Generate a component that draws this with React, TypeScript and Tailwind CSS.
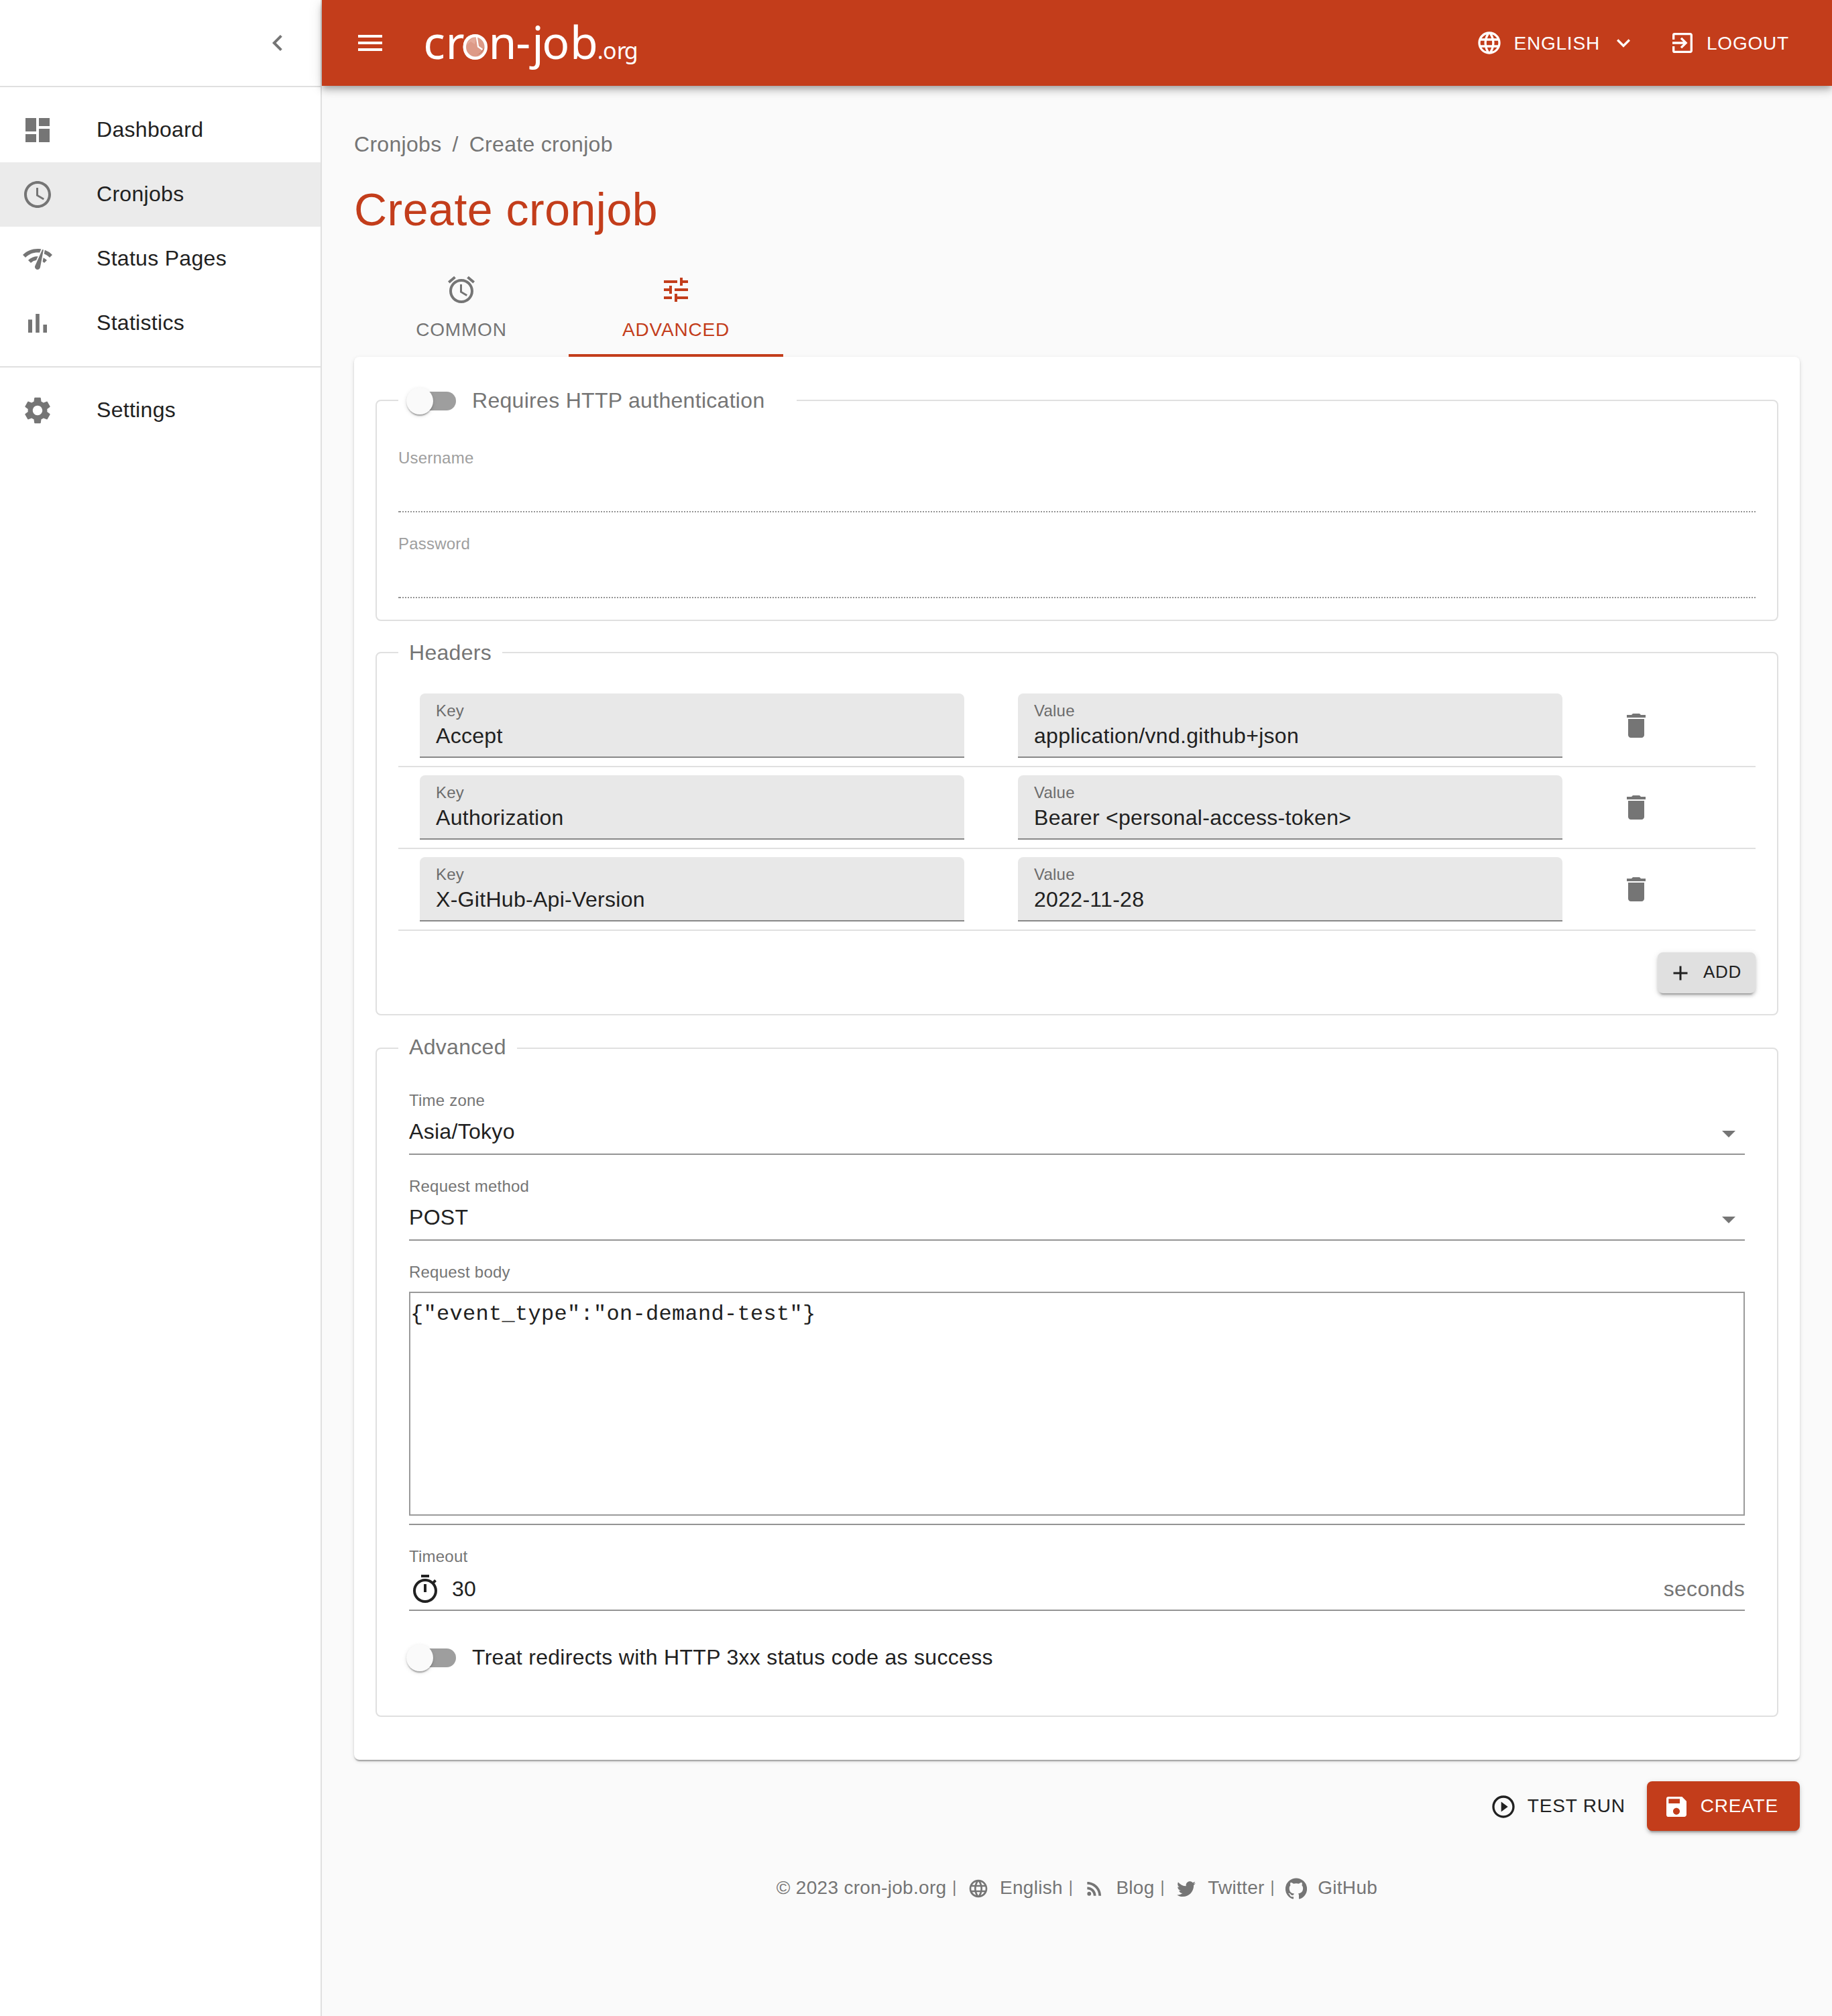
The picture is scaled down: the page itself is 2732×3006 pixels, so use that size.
import React from 'react';
import {
  MdAdd,
  MdArrowDropDown,
  MdDelete,
  MdExitToApp,
  MdExpandMore,
  MdLanguage,
  MdNetworkCheck,
  MdRssFeed,
  MdSave,
  MdSettings,
  MdTune,
} from 'react-icons/md';

const paths = {
  menu: 'M3 18h18v-2H3v2zm0-5h18v-2H3v2zm0-7v2h18V6H3z',
  chevronLeft: 'M15.41 7.41L14 6l-6 6 6 6 1.41-1.41L10.83 12z',
  dashboard: 'M3 13h8V3H3v10zm0 8h8v-6H3v6zm10 0h8V11h-8v10zm0-18v6h8V3h-8z',
  clock:
    'M11.99 2C6.47 2 2 6.48 2 12s4.47 10 9.99 10C17.52 22 22 17.52 22 12S17.52 2 11.99 2zM12 20c-4.42 0-8-3.58-8-8s3.58-8 8-8 8 3.58 8 8-3.58 8-8 8z M12.5 7H11v6l5.25 3.15.75-1.23-4.5-2.67z',
  bars: 'M5 9.2h3V19H5zM10.6 5h2.8v14h-2.8zm5.6 8H19v6h-2.8z',
  alarm:
    'M22 5.72l-4.6-3.86-1.29 1.53 4.6 3.86L22 5.72zM7.88 3.39L6.6 1.86 2 5.71l1.29 1.53 4.59-3.85zM12.5 8H11v6l4.75 2.85.75-1.23-4-2.37V8zM12 4c-4.97 0-9 4.03-9 9s4.02 9 9 9c4.97 0 9-4.03 9-9s-4.03-9-9-9zm0 16c-3.87 0-7-3.13-7-7s3.13-7 7-7 7 3.13 7 7-3.13 7-7 7z',
  timer:
    'M15 1H9v2h6V1zm-4 13h2V8h-2v6zm8.03-6.61l1.42-1.42c-.43-.51-.9-.99-1.41-1.41l-1.42 1.42C16.07 4.74 14.12 4 12 4c-4.97 0-9 4.03-9 9s4.02 9 9 9 9-4.03 9-9c0-2.12-.74-4.07-1.97-5.61zM12 20c-3.87 0-7-3.13-7-7s3.13-7 7-7 7 3.13 7 7-3.13 7-7 7z',
  play: 'M10 16.5l6-4.5-6-4.5v9zM12 2C6.48 2 2 6.48 2 12s4.48 10 10 10 10-4.48 10-10S17.52 2 12 2zm0 18c-4.41 0-8-3.59-8-8s3.59-8 8-8 8 3.59 8 8-3.59 8-8 8z',
  twitter:
    'M22.46 6c-.77.35-1.6.58-2.46.69.88-.53 1.56-1.37 1.88-2.38-.83.5-1.75.85-2.72 1.05C18.37 4.5 17.26 4 16 4c-2.35 0-4.27 1.92-4.27 4.29 0 .34.04.67.11.98C8.28 9.09 5.11 7.38 3 4.79c-.37.63-.58 1.37-.58 2.15 0 1.49.75 2.81 1.91 3.56-.71 0-1.37-.2-1.95-.5v.03c0 2.08 1.48 3.82 3.44 4.21a4.22 4.22 0 0 1-1.93.07 4.28 4.28 0 0 0 4 2.98 8.521 8.521 0 0 1-5.33 1.84c-.34 0-.68-.02-1.02-.06C3.44 20.29 5.7 21 8.12 21 16 21 20.33 14.46 20.33 8.79c0-.19 0-.37-.01-.56.84-.6 1.56-1.36 2.14-2.23z',
  github:
    'M12 .3a12 12 0 0 0-3.8 23.4c.6.1.8-.3.8-.6v-2c-3.3.7-4-1.6-4-1.6-.6-1.4-1.4-1.8-1.4-1.8-1-.7.1-.7.1-.7 1.2 0 1.9 1.2 1.9 1.2 1 1.8 2.8 1.3 3.5 1 0-.8.4-1.3.7-1.6-2.7-.3-5.5-1.3-5.5-6 0-1.2.5-2.3 1.3-3.1-.2-.4-.6-1.6 0-3.2 0 0 1-.3 3.4 1.2a11.5 11.5 0 0 1 6 0c2.3-1.5 3.3-1.2 3.3-1.2.6 1.6.2 2.8 0 3.2.9.8 1.3 1.9 1.3 3.2 0 4.6-2.8 5.6-5.5 5.9.5.4.9 1 .9 2.2v3.3c0 .3.1.7.8.6A12 12 0 0 0 12 .3',
};

function Icon({ name, className = 'size-12' }: { name: keyof typeof paths; className?: string }) {
  return (
    <svg viewBox="0 0 24 24" fill="currentColor" className={`shrink-0 ${className}`}>
      <path d={paths[name]} />
    </svg>
  );
}

function Logo() {
  return (
    <svg
      viewBox="0 -20 350 128"
      className="ml-11 h-32 w-[350px] shrink-0 overflow-visible"
      fill="white"
      fontFamily='"Noto Sans", sans-serif'
    >
      <text y="67.7" fontSize="68" x="11.3 44.5 67 108.5 149.2 173.2 188.2 229.9">
        cron-job
      </text>
      <text y="67.7" fontSize="34" x="270.8 279.1 299.8 310.8">
        .org
      </text>
      {/* Clock face inside the first "o" */}
      <ellipse cx="88.8" cy="50" rx="16" ry="16.8" fill="#dd9a87" stroke="white" strokeWidth="4.4" />
      <path d="M76 47 L82 42 L88 46 L90 36 A14 15 0 0 0 76 47Z" fill="#e5ab9a" />
      <path d="M102 50 A14 15 0 0 1 91 62 Q99 59 102 50Z" fill="#a5452c" />
      <path d="M90.8 35 L93 49.5 L99.5 54" fill="none" stroke="white" strokeWidth="2.2" />
    </svg>
  );
}

function NavItem({ icon, label, active }: { icon: React.ReactNode; label: string; active?: boolean }) {
  return (
    <a className={`flex h-24 items-center pl-8 ${active ? 'bg-[#ebebeb]' : ''}`}>
      <span className="w-28 text-[#757575]">{icon}</span>
      <span className="pb-0.5">{label}</span>
    </a>
  );
}

function Sidebar() {
  return (
    <aside className="w-[480px] shrink-0 border-r-2 border-[#e0e0e0] bg-white">
      <div className="flex h-32 items-center justify-end pr-10 text-[#757575]">
        <Icon name="chevronLeft" />
      </div>
      <hr className="border-t-2 border-[#e0e0e0]" />
      <nav className="py-4">
        <NavItem icon={<Icon name="dashboard" />} label="Dashboard" />
        <NavItem icon={<Icon name="clock" />} label="Cronjobs" active />
        <NavItem icon={<MdNetworkCheck className="size-12" />} label="Status Pages" />
        <NavItem icon={<Icon name="bars" />} label="Statistics" />
      </nav>
      <hr className="border-t-2 border-[#e0e0e0]" />
      <nav className="py-4">
        <NavItem icon={<MdSettings className="size-12" />} label="Settings" />
      </nav>
    </aside>
  );
}

function TopBar() {
  return (
    <header className="relative z-10 flex h-32 items-center bg-[#c33d1b] pr-16 pl-12 text-white shadow-[0_4px_8px_-2px_rgba(0,0,0,0.2),0_8px_10px_0_rgba(0,0,0,0.14),0_2px_20px_0_rgba(0,0,0,0.12)]">
      <Icon name="menu" />
      <Logo />
      <div className="ml-auto flex items-center text-[28px] leading-[49px] tracking-[0.8px]">
        <MdLanguage className="mr-4 size-10" />
        ENGLISH
        <MdExpandMore className="ml-[15px] size-10" />
        <MdExitToApp className="mr-4 ml-12 size-10" />
        LOGOUT
      </div>
    </header>
  );
}

function Toggle({ label }: { label: string }) {
  return (
    <label className="-ml-[22px] flex h-[76px] items-center">
      <span className="flex h-[76px] w-[116px] shrink-0 items-center pl-6">
        <span className="flex h-7 w-[68px] items-center rounded-full bg-[#9e9e9e]">
          <span className="-ml-1.5 size-10 shrink-0 rounded-full bg-[#fafafa] shadow-[0_4px_2px_-2px_rgba(0,0,0,0.2),0_2px_2px_0_rgba(0,0,0,0.14),0_2px_6px_0_rgba(0,0,0,0.12)]" />
        </span>
      </span>
      <span className="pb-0.5">{label}</span>
    </label>
  );
}

function DisabledField({ label }: { label: string }) {
  return (
    <div className="flex h-24 flex-col justify-between pt-[3px]">
      <span className="text-[24px] leading-6 tracking-[0.22px] text-[#9e9e9e]">{label}</span>
      <span className="h-0.5 border-l-2 border-[#949494] bg-[repeating-linear-gradient(90deg,#949494_0_2px,transparent_2px_4px)]" />
    </div>
  );
}

function FieldLabel({ children }: { children: React.ReactNode }) {
  return <div className="pt-[3px] text-[24px] leading-6 tracking-[0.22px] text-[#757575]">{children}</div>;
}

function SelectField({ label, value }: { label: string; value: string }) {
  return (
    <div className="mb-8 h-24 border-b-2 border-[#949494]">
      <FieldLabel>{label}</FieldLabel>
      <div className="mt-[5px] flex h-[62px] items-center justify-between">
        <span className="pb-1">{value}</span>
        <MdArrowDropDown className="mt-0.5 size-12 text-[#757575]" />
      </div>
    </div>
  );
}

function FilledField({ label, value }: { label: string; value: string }) {
  return (
    <div className="h-24 w-[812px] rounded-t-lg border-b-2 border-[#888888] bg-[#e8e8e8] px-6 pt-3.5">
      <div className="text-[24px] leading-6 tracking-[0.22px] text-[#6c6c6c]">{label}</div>
      <div className="mt-1.5 leading-[38px]">{value}</div>
    </div>
  );
}

const headers = [
  { key: 'Accept', value: 'application/vnd.github+json' },
  { key: 'Authorization', value: 'Bearer <personal-access-token>' },
  { key: 'X-GitHub-Api-Version', value: '2022-11-28' },
];

function Separator() {
  return (
    <span className="ml-2 flex h-8 w-[7.5px] items-center justify-center text-[23px] leading-none tracking-normal">
      <span className="-translate-y-0.5">|</span>
    </span>
  );
}

export default function App() {
  return (
    <div className="flex min-h-[3006px] w-[2732px] bg-[#fafafa] font-['Liberation_Sans',Arial,sans-serif] text-[32px] leading-[48px] tracking-[0.3px] text-[#212121]">
      <Sidebar />
      <div className="flex flex-1 flex-col">
        <TopBar />
        <main className="px-12 pt-[63px]">
          <div className="flex h-12 text-[#757575]">
            <span>Cronjobs</span>
            <span className="mx-4">/</span>
            <span>Create cronjob</span>
          </div>
          <h1 className="mt-[31px] text-[68px] leading-[84px] tracking-[0.5px] text-[#c33d1b]">Create cronjob</h1>

          <div className="mt-[34px] flex text-[28px] leading-[49px] tracking-[0.8px]">
            <div className="flex h-36 w-80 flex-col items-center pt-5 text-[#757575]">
              <Icon name="alarm" />
              <span className="mt-[11px]">COMMON</span>
            </div>
            <div className="flex h-36 w-80 flex-col items-center border-b-4 border-[#c33d1b] pt-5 text-[#c33d1b]">
              <MdTune className="size-12" />
              <span className="mt-[11px]">ADVANCED</span>
            </div>
          </div>

          <div className="rounded-lg bg-white px-8 py-16 shadow-[0_4px_2px_-2px_rgba(0,0,0,0.2),0_2px_2px_0_rgba(0,0,0,0.14),0_2px_6px_0_rgba(0,0,0,0.12)]">
            <section className="h-[330px] rounded-lg border-2 border-[#e0e0e0] px-8">
              <div className="-mt-[38px] w-fit bg-white pr-12 pl-4 text-[#757575]">
                <Toggle label="Requires HTTP authentication" />
              </div>
              <div className="mt-8 flex flex-col gap-8">
                <DisabledField label="Username" />
                <DisabledField label="Password" />
              </div>
            </section>

            <section className="mt-[46px] h-[542px] rounded-lg border-2 border-[#e0e0e0] px-8">
              <div className="-mt-[25px] w-fit bg-white px-4 text-[#757575]">Headers</div>
              <div className="mt-[25px]">
                {headers.map((h) => (
                  <div key={h.key} className="flex items-center border-b-2 border-[#e0e0e0] py-3 pl-8">
                    <FilledField label="Key" value={h.key} />
                    <div className="w-20" />
                    <FilledField label="Value" value={h.value} />
                    <MdDelete className="ml-[86px] size-12 text-[#757575]" />
                  </div>
                ))}
              </div>
              <div className="mt-8 flex justify-end">
                <button className="flex h-[61px] w-[146px] items-center rounded-lg bg-[#e0e0e0] pl-4 text-[26px] tracking-[0.74px] shadow-[0_6px_2px_-4px_rgba(0,0,0,0.2),0_4px_4px_0_rgba(0,0,0,0.14),0_2px_10px_0_rgba(0,0,0,0.12)]">
                  <MdAdd className="mr-4 size-9" />
                  <span className="pb-1">ADD</span>
                </button>
              </div>
            </section>

            <section className="mt-12 h-[998px] rounded-lg border-2 border-[#e0e0e0] px-8">
              <div className="-mt-[27px] w-fit bg-white px-4 text-[#757575]">Advanced</div>
              <div className="mt-[41px] px-4">
                <SelectField label="Time zone" value="Asia/Tokyo" />
                <SelectField label="Request method" value="POST" />

                <div className="mb-8 h-[392px] border-b-2 border-[#949494]">
                  <FieldLabel>Request body</FieldLabel>
                  <div className="mt-[17px] h-[334px] border-2 border-[#9a9a9a] pt-[13px] font-['Liberation_Mono',monospace] leading-[38px]">
                    {'{"event_type":"on-demand-test"}'}
                  </div>
                </div>

                <div className="mb-8 h-24 border-b-2 border-[#949494]">
                  <FieldLabel>Timeout</FieldLabel>
                  <div className="mt-[5px] flex h-[62px] items-center">
                    <Icon name="timer" className="mt-0.5 mr-4 size-12" />
                    <span>30</span>
                    <span className="ml-auto text-[#757575]">seconds</span>
                  </div>
                </div>

                <Toggle label="Treat redirects with HTTP 3xx status code as success" />
              </div>
            </section>
          </div>

          <div className="mt-8 flex items-center justify-end text-[28px] leading-[49px] tracking-[0.8px]">
            <button className="mr-8 flex items-center">
              <Icon name="play" className="mt-0.5 mr-4 size-10" />
              <span className="pb-0.5">TEST RUN</span>
            </button>
            <button className="flex h-[74px] items-center rounded-lg bg-[#c33d1b] pr-8 pl-6 text-white shadow-[0_6px_2px_-4px_rgba(0,0,0,0.2),0_4px_4px_0_rgba(0,0,0,0.14),0_2px_10px_0_rgba(0,0,0,0.12)]">
              <MdSave className="mt-0.5 mr-4 size-10" />
              <span className="pb-0.5">CREATE</span>
            </button>
          </div>

          <footer className="mt-[66px] flex h-10 items-center justify-center text-[28px] leading-9 text-[#757575]">
            <span className="pb-0.5">© 2023 cron-job.org</span>
            <Separator />
            <MdLanguage className="mx-4 size-8" />
            <span className="pb-0.5">English</span>
            <Separator />
            <MdRssFeed className="mx-4 size-8" />
            <span className="pb-0.5">Blog</span>
            <Separator />
            <Icon name="twitter" className="mx-4 size-8" />
            <span className="pb-0.5">Twitter</span>
            <Separator />
            <Icon name="github" className="mx-4 size-8" />
            <span className="pb-0.5">GitHub</span>
          </footer>
        </main>
      </div>
    </div>
  );
}
